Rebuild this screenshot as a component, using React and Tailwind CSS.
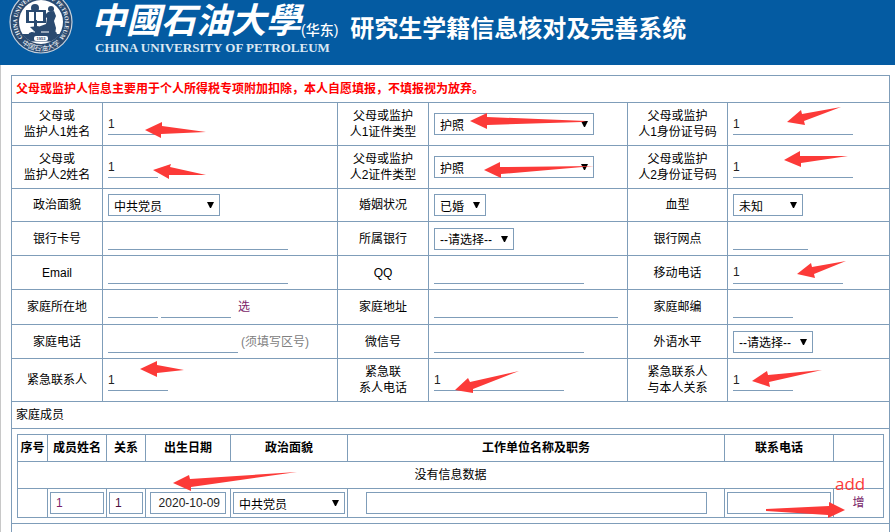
import { useState } from 'react';
import clsx from 'clsx';

const BORDER = 'border border-[#7f9db9]';

const arrows = [
  '145,130 162,122 162,126 206,132 161,134 161,138',
  '153,170 171,164 170,167 206,175 169,175 169,179',
  '470,121 487,113 487,117 586,121 582,122 487,125 487,129',
  '484,170 500,162 500,167 594,166 501,174 501,178',
  '787,122 801,110 802,114 841,107 804,121 805,125',
  '784,160 800,151 800,156 848,156 801,163 801,167',
  '797,274 811,263 812,267 846,261 814,274 815,278',
  '140,369 157,361 157,365 184,370 157,373 157,377',
  '455,390 468,378 470,382 519,371 473,389 473,393',
  '752,381 767,371 768,375 822,370 769,382 770,387',
  '173,483 189,475 190,479 297,472 191,487 191,491',
  '845,510 829,502 829,506 766,509 766,511 828,515 828,518',
];

// Each row: height class + three label/control pairs
const rows = [
  {
    h: 'h-[43px]',
    cells: [
      { id: 'p1name', label: ['父母或', '监护人1姓名'], value: '1', w: 'w-[50px]' },
      { id: 'p1type', label: ['父母或监护', '人1证件类型'], options: ['护照', '居民身份证'], w: 'w-40' },
      { id: 'p1no', label: ['父母或监护', '人1身份证号码'], value: '1', w: 'w-[120px]' },
    ],
  },
  {
    h: 'h-[43px]',
    cells: [
      { id: 'p2name', label: ['父母或', '监护人2姓名'], value: '1', w: 'w-[50px]' },
      { id: 'p2type', label: ['父母或监护', '人2证件类型'], options: ['护照', '居民身份证'], w: 'w-40' },
      { id: 'p2no', label: ['父母或监护', '人2身份证号码'], value: '1', w: 'w-[120px]' },
    ],
  },
  {
    h: 'h-[33px]',
    cells: [
      { id: 'political', label: ['政治面貌'], options: ['中共党员', '共青团员', '群众'], w: 'w-28' },
      { id: 'marriage', label: ['婚姻状况'], options: ['已婚', '未婚'], w: 'w-[52px]' },
      { id: 'blood', label: ['血型'], options: ['未知', 'A', 'B', 'AB', 'O'], w: 'w-[70px]' },
    ],
  },
  {
    h: 'h-[34px]',
    cells: [
      { id: 'card', label: ['银行卡号'], w: 'w-[180px]' },
      { id: 'bank', label: ['所属银行'], options: ['--请选择--'], w: 'w-20' },
      { id: 'branch', label: ['银行网点'], w: 'w-[75px]' },
    ],
  },
  {
    h: 'h-[34px]',
    cells: [
      { id: 'email', label: ['Email'], w: 'w-[180px]' },
      { id: 'qq', label: ['QQ'], w: 'w-[150px]' },
      { id: 'mobile', label: ['移动电话'], value: '1', w: 'w-[110px]' },
    ],
  },
  {
    h: 'h-[35px]',
    cells: [
      { id: 'region', label: ['家庭所在地'], region: true },
      { id: 'address', label: ['家庭地址'], w: 'w-[184px]' },
      { id: 'zip', label: ['家庭邮编'], w: 'w-[60px]' },
    ],
  },
  {
    h: 'h-[34px]',
    cells: [
      { id: 'homephone', label: ['家庭电话'], w: 'w-[130px]', hint: '(须填写区号)' },
      { id: 'wechat', label: ['微信号'], w: 'w-[150px]' },
      { id: 'language', label: ['外语水平'], options: ['--请选择--'], w: 'w-20' },
    ],
  },
  {
    h: 'h-[43px]',
    cells: [
      { id: 'contact', label: ['紧急联系人'], value: '1', w: 'w-[60px]' },
      { id: 'contactphone', label: ['紧急联', '系人电话'], value: '1', w: 'w-[130px]' },
      { id: 'contactrel', label: ['紧急联系人', '与本人关系'], value: '1', w: 'w-[60px]' },
    ],
  },
];

function LineInput({ id, value = '', w, ...rest }) {
  const [text, setText] = useState(value);
  return (
    <input
      id={id}
      type="text"
      value={text}
      onChange={(e) => setText(e.target.value)}
      className={clsx('block h-[22px] border-b border-[#7f9db9] text-[#222] outline-none', w)}
      {...rest}
    />
  );
}

function BoxInput({ value = '', className, ...rest }) {
  const [text, setText] = useState(value);
  return (
    <input
      type="text"
      value={text}
      onChange={(e) => setText(e.target.value)}
      className={clsx('block h-[22px] px-[5px] outline-none', BORDER, className)}
      {...rest}
    />
  );
}

function Select({ id, options, w, ...rest }) {
  return (
    <span className={clsx('relative block', w)}>
      <select id={id} className={clsx('block w-full h-[22px] pl-[5px] pt-[3px] appearance-none bg-white outline-none', BORDER)} {...rest}>
        {options.map((o) => <option key={o}>{o}</option>)}
      </select>
      <svg viewBox="0 0 7 6" className="absolute right-[6px] top-[8px] w-[7px] h-[6px] pointer-events-none">
        <path d="M0 0h7L4 6H3z" fill="#000" />
      </svg>
    </span>
  );
}

function Field({ cell }) {
  if (cell.region) {
    return (
      <div className="flex items-center">
        <LineInput id={cell.id} w="w-[50px]" />
        <LineInput w="w-[70px] ml-[3px]" aria-label="市县" />
        <a href="#region" className="ml-[7px] text-[#7b1f6a]">选</a>
      </div>
    );
  }
  if (cell.options) return <Select id={cell.id} options={cell.options} w={cell.w} />;
  return (
    <div className="flex items-center">
      <LineInput id={cell.id} value={cell.value} w={cell.w} />
      {cell.hint && <span className="ml-[3px] text-[#808080]">{cell.hint}</span>}
    </div>
  );
}

function Seal() {
  return (
    <svg viewBox="-32 -32 64 64" className="w-16 h-16 shrink-0">
      <defs>
        <path id="ringTop" d="M-17 17A24 24 0 1 1 17 17" />
        <path id="ringBottom" d="M-20.500 20.500A29 29 0 0 0 20.500 20.500" />
      </defs>
      <circle r="31" fill="#2a4a70" stroke="#c5d0dc" strokeWidth="1.2" />
      <circle r="22" fill="#fff" />
      <text fill="#f0f3f7" fontSize="6" fontWeight="700" fontFamily="Liberation Serif, serif">
        <textPath href="#ringTop" startOffset="50%" textAnchor="middle">CHINA UNIVERSITY OF PETROLEUM</textPath>
      </text>
      <text fill="#f0f3f7" fontSize="7" fontFamily="Noto Sans CJK SC, sans-serif">
        <textPath href="#ringBottom" startOffset="50%" textAnchor="middle">中国石油大学</textPath>
      </text>
      <g fill="#2a4a70">
        <path fillRule="evenodd" d="M-15 -12H5V1H-15zM-12 -10V-1H-7V-10zM-5 -10V-1H2V-10z" />
        <circle cx="-6" cy="-14" r="4" />
        <path d="M-7 -2h3v8h-3z" />
        <circle cx="10" cy="-13" r="3" />
        <path d="M7 -10l6 -1l2 5l-2 5l2 7l-1 6l-5 1l-4 -6l-7 1l-1 -3l8 -3l1 -6l-3 -2z" />
        <path d="M-11 5l8 -1l5 3l9 0l5 4l-2 4h-27l1 -4l5 -2z" />
        <path d="M-19 12h38a22 22 0 0 1 -9 7.600h-20a22 22 0 0 1 -9 -7.600z" />
      </g>
      <path d="M-12 9l6 1M0 10h8" stroke="#fff" strokeWidth="1" />
      <rect x="-7" y="14" width="14" height="5" rx="2" fill="#fff" />
      <text y="18" textAnchor="middle" fontSize="4" fontWeight="700" fill="#2a4a70" fontFamily="Liberation Sans, sans-serif">1953</text>
    </svg>
  );
}

function Header() {
  return (
    <header className="h-[65px] bg-[#045ba2] text-white flex items-start overflow-hidden whitespace-nowrap">
      <div className="ml-[9px] -mt-[10px]">
        <Seal />
      </div>
      <div className="ml-[18px]">
        <div className="flex items-end h-10">
          <span className="text-[35px] leading-[38px] font-bold italic">中國石油大學</span>
          <span className="text-[14px] leading-[20px] font-medium">(华东)</span>
        </div>
        <div className="ml-1 font-['Liberation_Serif',serif] text-[13px] leading-[16px] font-bold text-[#dce8f3]">
          CHINA UNIVERSITY OF PETROLEUM
        </div>
      </div>
      <h1 className="ml-[12px] mt-[14px] text-[24px] leading-[30px] font-bold">研究生学籍信息核对及完善系统</h1>
    </header>
  );
}

function MemberTable() {
  return (
    <table className="w-full table-fixed border-collapse text-center">
      <colgroup>
        <col className="w-[30px]" />
        <col className="w-[59px]" />
        <col className="w-[39px]" />
        <col className="w-[85px]" />
        <col className="w-[117px]" />
        <col />
        <col className="w-[109px]" />
        <col className="w-[50px]" />
      </colgroup>
      <thead>
        <tr className="h-[27px]">
          {['序号', '成员姓名', '关系', '出生日期', '政治面貌', '工作单位名称及职务', '联系电话', ''].map((t, i) => (
            <th key={i} className={clsx('p-0 font-bold', BORDER)}>{t}</th>
          ))}
        </tr>
      </thead>
      <tbody>
        <tr className="h-[27px]">
          <td colSpan={8} className={clsx('p-0', BORDER)}>没有信息数据</td>
        </tr>
        <tr className="h-[29px]">
          <td className={BORDER} />
          <td className={clsx('px-[2px] py-0', BORDER)}><BoxInput value="1" className="w-full text-[#7b1f6a]" aria-label="成员姓名" /></td>
          <td className={clsx('px-[2px] py-0', BORDER)}><BoxInput value="1" className="w-full text-[#4a1040]" aria-label="关系" /></td>
          <td className={clsx('px-[4px] py-0', BORDER)}><BoxInput value="2020-10-09" className="w-full text-right text-[#222]" aria-label="出生日期" /></td>
          <td className={clsx('px-[2px] py-0', BORDER)}><Select options={['中共党员', '共青团员', '群众']} w="w-full" aria-label="政治面貌" /></td>
          <td className={clsx('px-[2px] py-0', BORDER)}><BoxInput className="w-11/12 mx-auto" aria-label="工作单位名称及职务" /></td>
          <td className={clsx('px-[2px] py-0', BORDER)}><BoxInput className="w-full" aria-label="联系电话" /></td>
          <td className={clsx('p-0', BORDER)}><a href="#add" className="text-[#7b1f6a]">增</a></td>
        </tr>
      </tbody>
    </table>
  );
}

export default function App() {
  return (
    <div className="relative h-screen overflow-hidden bg-white text-black text-[12px] leading-[16px] font-['Liberation_Sans','Noto_Sans_CJK_SC',sans-serif]">
      <Header />
      <main className="border-l border-[#c8c8c8] pt-[10px] pl-[10px] pr-[5px]">
        <table className="w-full table-fixed border-collapse">
          <colgroup>
            <col className="w-[91px]" />
            <col className="w-[235px]" />
            <col className="w-[91px]" />
            <col className="w-[199px]" />
            <col className="w-[100px]" />
            <col />
          </colgroup>
          <tbody>
            <tr className="h-[27px]">
              <td colSpan={6} className={clsx('px-1 py-0 font-bold text-[#f00]', BORDER)}>
                父母或监护人信息主要用于个人所得税专项附加扣除，本人自愿填报，不填报视为放弃。
              </td>
            </tr>
            {rows.map((row, i) => (
              <tr key={i} className={row.h}>
                {row.cells.map((cell) => [
                  <td key={cell.id + '-l'} className={clsx('p-0 text-center', BORDER)}>
                    <label htmlFor={cell.id} className="block">
                      {cell.label.map((l) => <span key={l} className="block">{l}</span>)}
                    </label>
                  </td>,
                  <td key={cell.id} className={clsx('px-[5px] py-0', BORDER)}>
                    <Field cell={cell} />
                  </td>,
                ])}
              </tr>
            ))}
            <tr className="h-[27px]">
              <td colSpan={6} className={clsx('px-1 py-0', BORDER)}>家庭成员</td>
            </tr>
            <tr className="h-[95px]">
              <td colSpan={6} className={clsx('px-[5px] py-0', BORDER)}>
                <MemberTable />
              </td>
            </tr>
            <tr className="h-[34px]">
              <td colSpan={6} className={BORDER} />
            </tr>
          </tbody>
        </table>
      </main>

      <svg width="895" height="532" className="absolute left-0 top-0 pointer-events-none">
        {arrows.map((points) => <polygon key={points} points={points} fill="#fc3a38" />)}
      </svg>
      <span className="absolute left-[835px] top-[473px] text-[17px] leading-[22px] text-[#fc3a38] font-['Open_Sans',sans-serif] pointer-events-none">add</span>
    </div>
  );
}
